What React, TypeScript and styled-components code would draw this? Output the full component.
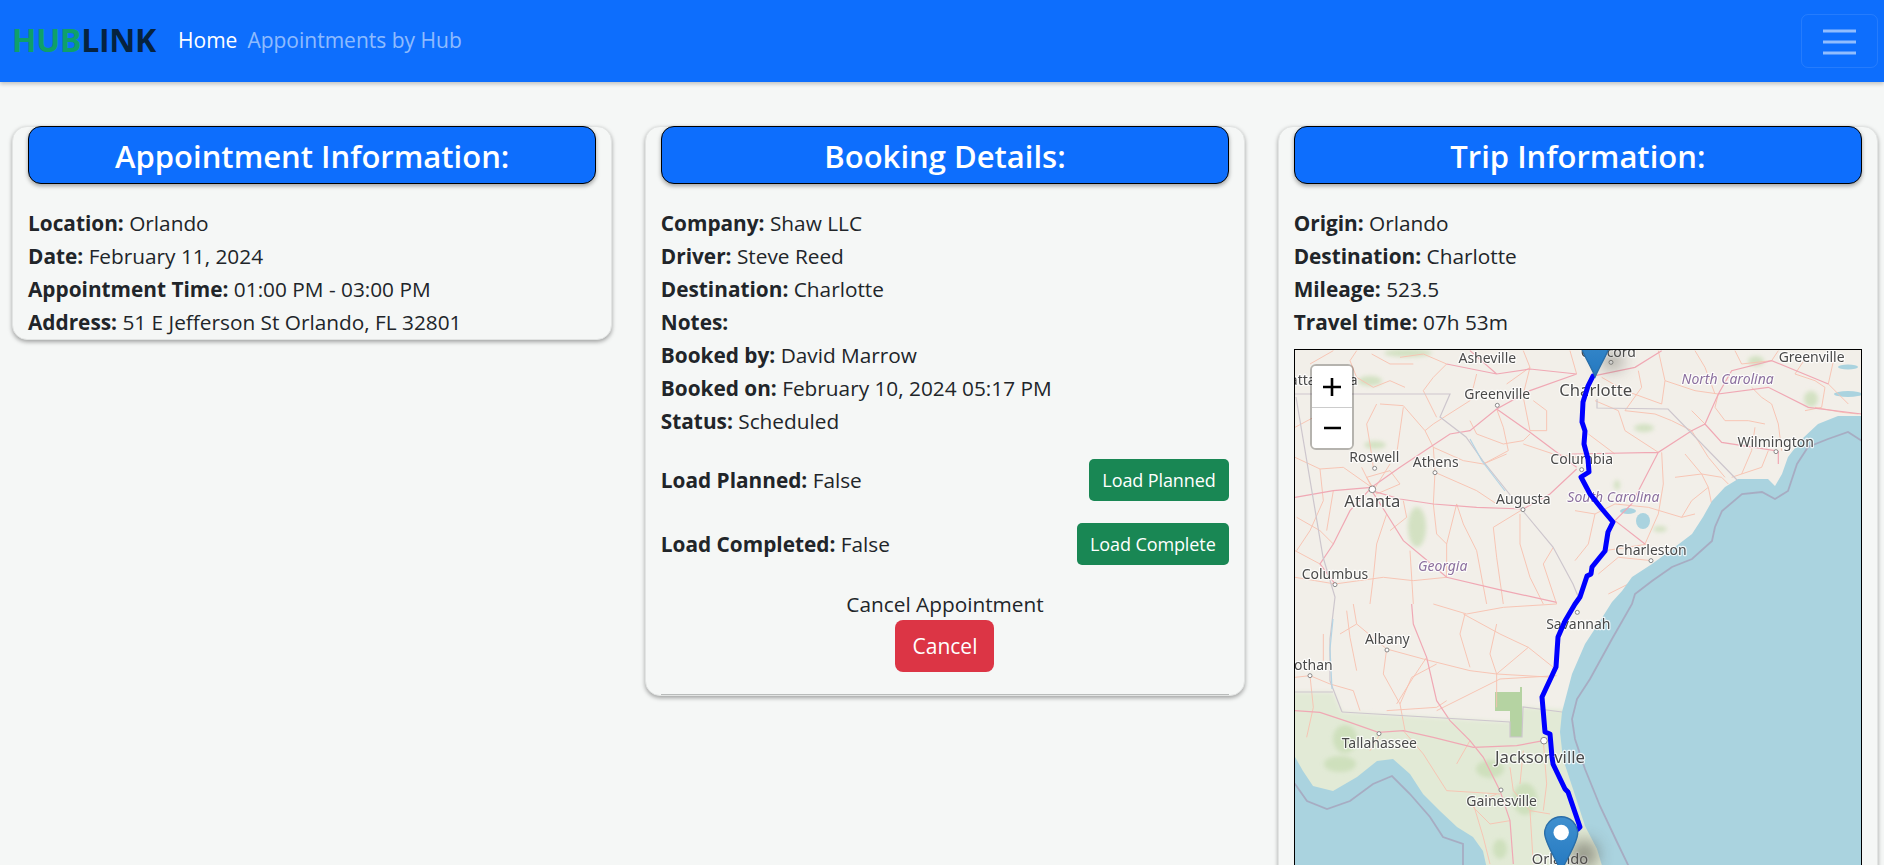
import React from "react";
import styled, { createGlobalStyle } from "styled-components";

const Global = createGlobalStyle`
  html, body { margin: 0; padding: 0; height: 865px; overflow: hidden; background: #f5f7f6; }
  body { font-family: "Open Sans", "Noto Sans", "Liberation Sans", sans-serif; font-size: 20.8px; line-height: 33px; color: #212529; }
  * { box-sizing: border-box; }
`;

const Navbar = styled.nav`
  height: 82px; background: #0d6efd; display: flex; align-items: center; padding: 0 6px 2px 12px;
  box-shadow: 0 2px 4px rgba(0,0,0,.22);
`;
const Brand = styled.div`
  font-size: 32px; font-weight: 700; line-height: 1; margin-right: 22px; color: #06233f; letter-spacing: -0.3px;
`;
const BrandAccent = styled.span` color: #0fa06a; `;
const NavLink = styled.a<{ $active?: boolean }>`
  color: ${p => (p.$active ? "#fff" : "rgba(255,255,255,.55)")};
  margin-right: 10px; font-size: 21px;
`;
const Toggler = styled.button`
  margin-left: auto; width: 77px; height: 54px; background: transparent; border: 1px solid rgba(255,255,255,.1);
  border-radius: 7px; display: flex; align-items: center; justify-content: center; padding: 0; margin-top: 2px;
`;
const Columns = styled.main`
  display: grid; grid-template-columns: repeat(3, 1fr); gap: 32.5px; align-items: start; padding: 44px 6px 0 12px;
`;
const Card = styled.section`
  background: #f5f7f6; border-radius: 15px; padding: 0 15px; border: 1px solid #e2e4e3;
  box-shadow: 0 2px 4px rgba(0,0,0,.35);
`;
const CardHeader = styled.h2`
  margin: -1px 0 23px; height: 58px; background: #0d6efd; color: #fff; border: 1px solid #000; border-radius: 13px;
  font-size: 31px; font-weight: 600; line-height: 58px; text-align: center;
  box-shadow: 0 2px 4px rgba(0,0,0,.35);
`;
const Info = styled.div``;
const Label = styled.strong` font-weight: 700; `;
const LoadRow = styled.div<{ $first?: boolean }>`
  display: flex; justify-content: space-between; align-items: center; margin-top: ${p => (p.$first ? 21 : 22)}px;
`;
const GreenButton = styled.button`
  height: 42px; padding: 0 13.5px; background: #198754; color: #fff; border: 0; border-radius: 5px;
  font: 400 18px "Open Sans", sans-serif; letter-spacing: -0.1px;
`;
const CancelBlock = styled.div`
  display: flex; flex-direction: column; align-items: center; margin-top: 23px; padding-bottom: 22px;
  border-bottom: 1px solid #b9bcbb;
`;
const CancelButton = styled.button`
  width: 99px; height: 52px; margin-top: -1px; background: #dc3545; color: #fff; border: 0; border-radius: 8px;
  font: 400 21px "Open Sans", sans-serif;
`;
const MapFrame = styled.div`
  position: relative; height: 640px; margin-top: 10px; margin-bottom: 20px; border: 1px solid #000; overflow: hidden; background: #f2efe9;
`;
const MapCanvas = styled.svg` display: block; `;
const ZoomBox = styled.div`
  position: absolute; left: 15px; top: 14px; width: 44px; border: 2px solid rgba(0,0,0,.25); border-radius: 6px; overflow: hidden;
  background-clip: padding-box; display: flex; flex-direction: column;
`;
const ZoomBtn = styled.div`
  height: 41px; background: #fff; color: #000; display: flex; align-items: center; justify-content: center;
  & + & { border-top: 1px solid #ccc; }
`;

const T = styled.text<{ $s?: number; $i?: boolean }>`
  font-family: "Noto Sans", "Open Sans", sans-serif; font-size: ${p => p.$s ?? 42}px; text-anchor: middle;
  fill: ${p => (p.$i ? "#8b6f9e" : "#4a4a4a")}; font-style: ${p => (p.$i ? "italic" : "normal")};
  stroke: rgba(255,255,255,.8); stroke-width: 7px; paint-order: stroke; stroke-linejoin: round;
`;

const z5Main = [
  "M15 460 L130 440 L245 430", "M245 430 L330 370 L420 310 L480 270 L540 260 L620 195 L720 140 L860 90",
  "M245 440 L330 465 L430 480 L560 490 L700 495 L780 450 L860 375", "M245 440 L290 510 L340 590 L400 640 L470 700 L640 740 L800 775",
  "M245 430 L180 500 L130 600 L90 660 L135 720", "M620 195 L720 265 L860 370", "M470 60 L620 90 L720 75 L860 90", "M540 20 L620 90",
];
const z5Sec = [
  "M15 340 L90 375 L160 370 L245 430", "M90 375 L100 470 L60 560 L20 620", "M245 30 L300 60 L370 60", "M260 180 L230 240 L240 300 L250 370",
  "M340 190 L330 260 L320 330", "M430 240 L405 260 L430 310 L435 385 L430 480 L440 570 L470 600 L470 700", "M290 510 L260 600 L250 700 L240 780",
  "M500 480 L520 540 L560 620 L590 780", "M435 385 L560 440 L620 480", "M540 230 L560 270 L640 300 L700 290 L720 270", "M620 195 L640 250 L655 320 L580 360",
  "M700 495 L610 550 L620 640 L640 780", "M690 510 L690 600 L720 700 L760 780", "M700 160 L720 260 L770 260 L770 200 L730 170", "M790 610 L760 660 L800 780",
  "M15 700 L135 720 L280 700 L370 710 L470 700", "M360 620 L370 780", "M650 120 L720 70 L700 20", "M840 20 L860 90", "M130 20 L60 60",
  "M200 20 L180 50 L200 100 L250 130 L300 110 L345 130", "M470 60 L430 100 L400 140 L440 220", "M15 250 L90 210", "M230 400 L300 380 L330 420 L260 450 Z", "M215 370 L250 440 L300 360",
  "M270 180 L340 185 L405 260", "M340 470 L350 520 L300 560", "M20 520 L90 560 L130 600", "M560 90 L540 170 L430 240", "M720 70 L700 150",
  "M430 310 L520 350 L580 360 L650 330", "M500 480 L470 600", "M330 40 L400 30 L470 60", "M130 440 L110 560", "M700 300 L790 330 L860 340", "M15 620 L90 660",
];
const z6Main = [
  "M60 95 L180 70 L260 20", "M-10 330 L250 325 L350 260 L390 240 L430 150 L580 130 L700 190 L860 210", "M250 325 L170 480 L120 530",
  "M390 240 L440 295 L600 320", "M430 150 L470 80 L590 50 L760 120", "M610 320 L610 360", "M120 530 L210 600",
];
const z6Sec = [
  "M250 20 L270 110 L260 180", "M360 20 L390 70 L420 150", "M480 20 L500 60 L590 50 L610 20", "M530 130 L560 160 L590 180 L610 240 L620 320",
  "M660 90 L720 110 L750 130 L740 190 L690 200", "M430 150 L420 190 L450 230 L520 230 L570 240", "M60 170 L130 200 L150 260 L250 325",
  "M150 200 L240 210 L290 230 L350 260 L400 340 L450 400", "M350 200 L390 240", "M330 330 L380 390 L400 430 L410 480", "M260 325 L265 420 L250 510 L210 600",
  "M300 400 L380 390 L440 400 L460 420", "M120 480 L220 490 L320 520 L360 510", "M90 620 L220 600", "M70 690 L130 640 L230 650", "M100 750 L200 700",
  "M720 190 L800 205 L850 210", "M580 320 L560 370 L470 400", "M80 100 L150 140 L260 180", "M0 500 L60 510 L40 600 L0 650",
  "M190 80 L200 130 L150 200", "M270 110 L360 140 L430 150", "M700 30 L660 90", "M780 30 L760 120 L820 180", "M540 250 L530 320 L500 390", "M60 510 L120 480", "M40 270 L120 330", "M400 430 L350 470 L320 520",
];
const z7Main = [
  "M365 0 L370 60 L410 160 L440 290 L480 350 L540 410 L580 460 L630 560 L660 650 L670 780",
  "M15 320 L90 325 L180 355 L265 385 L340 380 L430 400 L550 430 L680 425 L760 410",
];
const z7Sec = [
  "M440 320 L540 270 L630 225 L800 215", "M190 0 L200 60 L290 135 L400 165 L540 200 L620 210 L790 220", "M290 135 L280 210 L330 300 L345 380",
  "M520 30 L630 90 L715 130 L790 190", "M525 30 L510 90 L540 190", "M715 130 L620 210 L620 310", "M15 220 L60 215 L120 240 L190 260 L210 320",
  "M410 160 L370 220 L320 300", "M170 20 L180 100 L200 200", "M100 90 L100 170", "M290 320 L440 310 L470 290", "M340 380 L400 450 L470 560 L630 570",
  "M430 0 L530 30 L640 10 L800 0", "M660 490 L670 560 L720 620 L780 630", "M540 600 L600 660 L660 650", "M760 410 L770 540 L760 620", "M620 570 L550 600 L580 700",
  "M60 215 L70 310 L50 400", "M200 60 L150 90", "M330 300 L365 220 L440 180", "M620 60 L600 150 L620 210", "M270 390 L240 440", "M700 440 L690 540", "M580 700 L600 780", "M720 620 L730 780", "M540 410 L500 480",
];

const route = "M1593 377 L1588 387 L1583 403 L1582 423 L1585 432 L1584 445 L1588 460 L1589 473 L1581 478 L1590 495 L1602 510 L1613 523 L1608 533 L1605 552 L1592 568 L1591 575 L1587 577 L1580 598 L1575 605 L1565 622 L1558 638 L1556 668 L1542 698 L1545 733 L1550 735 L1552 758 L1553 765 L1565 790 L1568 793 L1580 828 L1578 830";
const eastSea = "1862,417 1838,417 1818,425 1802,440 1788,458 1782,475 1775,487 1768,480 1755,480 1738,480 1725,488 1712,502 1703,518 1692,535 1675,548 1652,565 1632,578 1622,592 1612,603 1600,622 1585,645 1572,675 1562,713 1560,733 1563,760 1573,790 1585,827 1597,850 1603,870 1870,870 1870,417";
const eastEdge = "M1862 442 L1848 433 L1828 440 L1808 448 L1797 465 L1788 492 L1775 500 L1762 493 L1742 495 L1722 512 L1715 528 L1712 542 L1692 560 L1672 568 L1652 582 L1635 595 L1632 605 L1612 640 L1590 680 L1577 700 L1572 720 L1575 740 L1585 770 L1600 807 L1617 843 L1630 870";
const gulf = "1290,756 1295,758 1303,772 1313,787 1333,792 1357,778 1377,762 1393,760 1410,775 1423,795 1440,812 1457,828 1473,838 1483,852 1487,870 1290,870";
const gulfEdge = "M1290 783 L1295 785 L1307 802 L1327 810 L1350 802 L1373 785 L1392 777 L1410 795 L1430 818 L1443 838 L1463 845 L1463 870";
const florida = "1290,693 1333,693 1342,713 1510,723 1523,708 1600,713 1640,870 1290,870";
const pinPath = "M12.5 .5C5.9 .5 .5 5.9 .5 12.5C.5 19 8 30 12.5 40.5C17 30 24.5 19 24.5 12.5C24.5 5.9 19.1 .5 12.5 .5Z";

const Roads = ({ main, sec }: { main: string[]; sec: string[] }) => (
  <>
    <path d={sec.join(" ")} fill="none" stroke="#f8c2b0" strokeWidth={2.8} />
    <path d={main.join(" ")} fill="none" stroke="#f0a8b4" strokeWidth={3.6} />
  </>
);
const Dots = ({ pts }: { pts: [number, number, number?][] }) => (
  <>
    {pts.map(([x, y, r], i) => (
      <circle key={i} cx={x} cy={y} r={r ?? 6} fill="#fff" stroke="#777" strokeWidth={2.6} />
    ))}
  </>
);
const Pin = ({ x, y }: { x: number; y: number }) => (
  <g transform={`translate(${x} ${y}) scale(1.375)`}>
    <path d={pinPath} fill="url(#pinFill)" stroke="#2a6ea8" strokeWidth={1} />
    <circle cx={12.5} cy={12} r={5.6} fill="#fff" />
  </g>
);

const TripMap = () => (
  <MapCanvas width={566} height={640} viewBox="1295 351 566 640">
    <defs>
      <filter id="soft"><feGaussianBlur stdDeviation="0.55" /></filter>
      <filter id="softText"><feGaussianBlur stdDeviation="0.3" /></filter>
      <filter id="patch"><feGaussianBlur stdDeviation="2.2" /></filter>
      <filter id="shade" x="-200%" y="-200%" width="500%" height="500%"><feGaussianBlur stdDeviation="8" /></filter>
      <linearGradient id="pinFill" x1="0" y1="0" x2="0" y2="1">
        <stop offset="0" stopColor="#3f90cf" />
        <stop offset="1" stopColor="#2478c0" />
      </linearGradient>
    </defs>
    <g filter="url(#soft)">
      <rect x="1290" y="345" width="580" height="650" fill="#f2efe9" />
      <polygon points={florida} fill="#e2ead6" filter="url(#patch)" />
      <g fill="#c6dcb2" opacity=".7" filter="url(#patch)">
        <ellipse cx="1417" cy="528" rx="9" ry="20" />
        <ellipse cx="1370" cy="382" rx="12" ry="5" />
        <ellipse cx="1408" cy="354" rx="24" ry="4" />
        <ellipse cx="1375" cy="446" rx="11" ry="4" />
        <ellipse cx="1644" cy="429" rx="10" ry="4" />
        <ellipse cx="1811" cy="400" rx="7" ry="8" />
        <ellipse cx="1617" cy="486" rx="3" ry="5" />
        <ellipse cx="1756" cy="362" rx="8" ry="5" />
        <ellipse cx="1660" cy="530" rx="7" ry="3" />
        <ellipse cx="1340" cy="765" rx="16" ry="8" />
        <ellipse cx="1345" cy="740" rx="12" ry="14" />
        <ellipse cx="1490" cy="770" rx="14" ry="9" />
        <ellipse cx="1525" cy="800" rx="12" ry="16" />
        <ellipse cx="1500" cy="850" rx="7" ry="10" />
      </g>
      <polygon points="1495,693 1520,693 1520,688 1522,688 1522,738 1510,738 1510,712 1495,712" fill="#b5d3a2" />
      <g fill="#aad3df">
        <ellipse cx="1643" cy="522" rx="7" ry="8" />
        <ellipse cx="1628" cy="512" rx="8" ry="3" />
        <ellipse cx="1848" cy="395" rx="14" ry="3" />
        <ellipse cx="1848" cy="368" rx="10" ry="2.5" />
      </g>
      <g transform="translate(1290 345) scale(.3333)">
        <Roads main={z5Main} sec={z5Sec} />
      </g>
      <g transform="translate(1575 345) scale(.3333)">
        <Roads main={z6Main} sec={z6Sec} />
      </g>
      <g transform="translate(1290 605) scale(.3333)">
        <Roads main={z7Main} sec={z7Sec} />
      </g>
      <g fill="none" stroke="#cdc6cd" strokeWidth="1.2">
        <path d="M1295 395 L1450 395 L1440 418 L1466 438 L1483 462 L1507 492 L1523 512 L1553 548 L1573 585 L1580 602" />
        <path d="M1296 398 L1323 558 L1335 598 L1330 640 L1330 682 L1342 713" />
        <path d="M1597 400 L1597 409 L1668 410 L1738 482" />
        <path d="M1295 693 L1333 693 M1342 713 L1510 723 L1510 738 L1522 738 L1523 708 L1562 713" />
      </g>
      <polygon points={eastSea} fill="#aad3df" />
      <polygon points={gulf} fill="#aad3df" />
      <path d={eastEdge} fill="none" stroke="#a59fb8" strokeWidth="1.8" opacity=".75" />
      <path d={gulfEdge} fill="none" stroke="#a59fb8" strokeWidth="1.8" opacity=".75" />
      <g fill="none" stroke="#b4d4e4" strokeWidth="1.2">
        <path d="M1470 440 L1482 462 L1505 492" />
        <path d="M1333 620 L1330 650 L1332 690" />
      </g>
    </g>
    <g filter="url(#softText)">
      <g transform="translate(1290 345) scale(.3333)">
        <T x={75} y={122}>Chattanooga</T>
        <T x={592} y={57}>Asheville</T>
        <T x={622} y={165}>Greenville</T>
        <T x={253} y={354}>Roswell</T>
        <T x={437} y={368}>Athens</T>
        <T x={247} y={489} $s={50}>Atlanta</T>
        <T x={700} y={479}>Augusta</T>
        <T x={458} y={682} $i>Georgia</T>
        <T x={135} y={705}>Columbus</T>
        <Dots pts={[[254, 373], [435, 386], [247, 436, 10], [699, 497], [622, 184], [135, 722]]} />
      </g>
      <g transform="translate(1575 345) scale(.3333)">
        <T x={62} y={155} $s={50}>Charlotte</T>
        <T x={100} y={38}>Concord</T>
        <T x={458} y={121} $i>North Carolina</T>
        <T x={710} y={55}>Greenville</T>
        <T x={602} y={308}>Wilmington</T>
        <T x={20} y={359}>Columbia</T>
        <T x={115} y={473} $i>South Carolina</T>
        <T x={228} y={632}>Charleston</T>
        <Dots pts={[[108, 55], [603, 323], [228, 650], [20, 377]]} />
      </g>
      <g transform="translate(1290 605) scale(.3333)">
        <T x={865} y={75}>Savannah</T>
        <T x={292} y={120}>Albany</T>
        <T x={55} y={198}>Dothan</T>
        <T x={268} y={432}>Tallahassee</T>
        <T x={750} y={478} $s={50}>Jacksonville</T>
        <T x={635} y={606}>Gainesville</T>
        <T x={810} y={780} $s={44}>Orlando</T>
        <Dots pts={[[60, 215], [291, 138], [267, 389], [762, 410, 10], [633, 558], [862, 25]]} />
      </g>
    </g>
    <ellipse cx="1612" cy="362" rx="12" ry="9" fill="#5c5a50" opacity=".5" filter="url(#shade)" />
    <ellipse cx="1584" cy="855" rx="14" ry="14" fill="#5c5a50" opacity=".6" filter="url(#shade)" />
    <path d={route} fill="none" stroke="#0000ff" strokeWidth="5" strokeLinejoin="round" strokeLinecap="round" />
    <Pin x={1578} y={322} />
    <Pin x={1544} y={817} />
  </MapCanvas>
);

const Field = ({ k, v }: { k: string; v: string }) => (
  <Info><Label>{k}:</Label> {v}</Info>
);

export default function App() {
  return (
    <>
      <Global />
      <Navbar>
        <Brand><BrandAccent>HUB</BrandAccent>LINK</Brand>
        <NavLink $active>Home</NavLink>
        <NavLink>Appointments by Hub</NavLink>
        <Toggler aria-label="menu">
          <svg width="33" height="27" viewBox="0 0 33 27">
            <path d="M0 3H33M0 14H33M0 25H33" stroke="rgba(255,255,255,.55)" strokeWidth="3" />
          </svg>
        </Toggler>
      </Navbar>
      <Columns>
        <Card>
          <CardHeader>Appointment Information:</CardHeader>
          <Field k="Location" v="Orlando" />
          <Field k="Date" v="February 11, 2024" />
          <Field k="Appointment Time" v="01:00 PM - 03:00 PM" />
          <Field k="Address" v="51 E Jefferson St Orlando, FL 32801" />
        </Card>
        <Card>
          <CardHeader>Booking Details:</CardHeader>
          <Field k="Company" v="Shaw LLC" />
          <Field k="Driver" v="Steve Reed" />
          <Field k="Destination" v="Charlotte" />
          <Field k="Notes" v="" />
          <Field k="Booked by" v="David Marrow" />
          <Field k="Booked on" v="February 10, 2024 05:17 PM" />
          <Field k="Status" v="Scheduled" />
          <LoadRow $first>
            <span><Label>Load Planned:</Label> False</span>
            <GreenButton>Load Planned</GreenButton>
          </LoadRow>
          <LoadRow>
            <span><Label>Load Completed:</Label> False</span>
            <GreenButton>Load Complete</GreenButton>
          </LoadRow>
          <CancelBlock>
            <span>Cancel Appointment</span>
            <CancelButton>Cancel</CancelButton>
          </CancelBlock>
        </Card>
        <Card>
          <CardHeader>Trip Information:</CardHeader>
          <Field k="Origin" v="Orlando" />
          <Field k="Destination" v="Charlotte" />
          <Field k="Mileage" v="523.5" />
          <Field k="Travel time" v="07h 53m" />
          <MapFrame>
            <TripMap />
            <ZoomBox>
              <ZoomBtn>
                <svg width="22" height="22" viewBox="0 0 22 22"><path d="M11 2V20M2 11H20" stroke="#000" strokeWidth="2.6" /></svg>
              </ZoomBtn>
              <ZoomBtn>
                <svg width="22" height="22" viewBox="0 0 22 22"><path d="M3 11H20" stroke="#000" strokeWidth="2.6" /></svg>
              </ZoomBtn>
            </ZoomBox>
          </MapFrame>
        </Card>
      </Columns>
    </>
  );
}
